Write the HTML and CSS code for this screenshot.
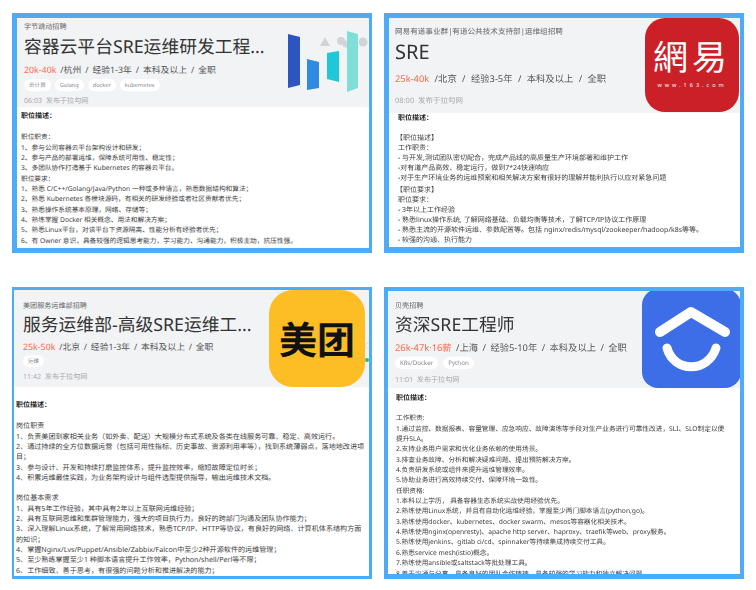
FILE: index.html
```html
<!DOCTYPE html>
<html lang="en">
<head>
<meta charset="UTF-8">
<meta name="viewport" content="width=device-width, initial-scale=1.0">
<title>SRE 招聘</title>
<link rel="stylesheet" href="styles.css">
</head>
<body>
<div class="board">

    <div class="card card-bytedance">
        <div class="head">
            <div class="company">字节跳动招聘</div>
            <div class="title">容器云平台SRE运维研发工程...</div>
            <div class="meta"><span class="pay">20k-40k</span> /杭州 / 经验1-3年 / 本科及以上 / 全职</div>
            <div class="tags"><span>云计算</span><span>Golang</span><span>docker</span><span>kubernetes</span></div>
            <div class="time">06:03&nbsp; 发布于拉勾网</div>
        </div>
        <div class="desc">
            <h3>职位描述：</h3>
            <p class="gap"></p>
            <p>职位职责：</p>
            <p>1、参与公司容器云平台架构设计和研发；</p>
            <p>2、参与产品的部署运维，保障系统可用性、稳定性；</p>
            <p>3、多团队协作打造基于 Kubernetes 的容器云平台。</p>
            <p>职位要求：</p>
            <p>1、熟悉 C/C++/Golang/Java/Python 一种或多种语言，熟悉数据结构和算法；</p>
            <p>2、熟悉 Kubernetes 各模块源码，有相关的研发经验或者社区贡献者优先；</p>
            <p>3、熟悉操作系统基本原理，网络、存储等；</p>
            <p>4、熟练掌握 Docker 相关概念、用法和解决方案；</p>
            <p>5、熟悉Linux平台，对该平台下资源隔离、性能分析有经验者优先；</p>
            <p>6、有 Owner 意识，具备较强的逻辑思考能力，学习能力、沟通能力，积极主动，抗压性强。</p>
        </div>
        <svg class="logo logo-bars" viewBox="0 0 90 66">
            <g fill="#d2d4d7">
                <path d="M33 16l5-9 5 9z"/>
                <circle cx="54" cy="11" r="4"/>
                <circle cx="59" cy="14" r="3.5"/>
                <circle cx="76" cy="12" r="4.5"/>
            </g>
            <polygon fill="#2d55c0" points="1,4 13,7 13,55 1,58"/>
            <polygon fill="#2f8be0" points="20,29 32,32 32,58 20,60"/>
            <polygon fill="#1ec8d6" points="40,23 52,21 52,52 40,49"/>
            <polygon fill="#7fdfd6" points="60,1 71,4 71,58 60,62"/>
        </svg>
    </div>

    <div class="card card-netease">
        <div class="head">
            <div class="company">网易有道事业群|有道公共技术支持部|运维组招聘</div>
            <div class="title">SRE</div>
            <div class="meta"><span class="pay">25k-40k</span> /北京 / 经验3-5年 / 本科及以上 / 全职</div>
            <div class="time">08:00&nbsp; 发布于拉勾网</div>
        </div>
        <div class="desc">
            <h3>职位描述：</h3>
            <p class="gap"></p>
            <p class="bracket">【职位描述】</p>
            <p>工作职责：</p>
            <p>- 与开发,测试团队密切配合，完成产品线的高质量生产环境部署和维护工作</p>
            <p>-对有道产品高效、稳定运行，做到7*24快速响应</p>
            <p>-对于生产环境业务的运维预案和相关解决方案有很好的理解并能利执行以应对紧急问题</p>
            <p class="bracket bracket-second">【职位要求】</p>
            <p>职位要求：</p>
            <p>- 3年以上工作经验</p>
            <p>- 熟悉linux操作系统, 了解网络基础、负载均衡等技术，了解TCP/IP协议工作原理</p>
            <p>- 熟悉主流的开源软件运维、参数配置等。包括 nginx/redis/mysql/zookeeper/hadoop/k8s等等。</p>
            <p>- 较强的沟通、执行能力</p>
        </div>
        <div class="logo logo-163">
            <span class="logo-163-name">網易</span>
            <span class="logo-163-url">www.163.com</span>
        </div>
    </div>

    <div class="card card-meituan">
        <div class="head">
            <div class="company">美团服务运维部招聘</div>
            <div class="title">服务运维部-高级SRE运维工...</div>
            <div class="meta"><span class="pay">25k-50k</span> /北京 / 经验1-3年 / 本科及以上 / 全职</div>
            <div class="tags"><span>运维</span></div>
            <div class="time">11:42&nbsp; 发布于拉勾网</div>
        </div>
        <div class="desc">
            <h3>职位描述：</h3>
            <p class="gap"></p>
            <p>岗位职责</p>
            <p>1、负责美团到家相关业务（如外卖、配送）大规模分布式系统及各类在线服务可靠、稳定、高效运行。</p>
            <p>2、通过持续的全方位数据运营（包括可用性指标、历史事故、资源利用率等），找到系统薄弱点，落地地改进项<br>目；</p>
            <p>3、参与设计、开发和持续打磨监控体系，提升监控效率，缩短故障定位时长；</p>
            <p>4、积累运维最佳实践，为业务架构设计与组件选型提供指导，输出运维技术文档。</p>
            <p class="gap"></p>
            <p>岗位基本需求</p>
            <p>1、具有5年工作经验，其中具有2年以上互联网运维经验；</p>
            <p>2、具有互联网思维和集群管理能力，强大的项目执行力，良好的跨部门沟通及团队协作能力；</p>
            <p>3、深入理解Linux系统，了解常用网络技术，熟悉TCP/IP、HTTP等协议，有良好的网络、计算机体系结构方面<br>的知识；</p>
            <p>4、掌握Nginx/Lvs/Puppet/Ansible/Zabbix/Falcon中至少2种开源软件的运维管理；</p>
            <p>5、至少熟练掌握至少1 种脚本语言提升工作效率，Python/shell/Perl等不限；</p>
            <p>6、工作细致、善于思考，有很强的问题分析和推进解决的能力；</p>
        </div>
        <div class="logo logo-meituan">美团</div>
        <span class="dot dot-ring"></span>
        <span class="dot dot-green"></span>
    </div>

    <div class="card card-beike">
        <div class="head">
            <div class="company">贝壳招聘</div>
            <div class="title">资深SRE工程师</div>
            <div class="meta"><span class="pay">26k-47k·16薪</span> /上海 / 经验5-10年 / 本科及以上 / 全职</div>
            <div class="tags"><span>K8s/Docker</span><span>Python</span></div>
            <div class="time">11:01&nbsp; 发布于拉勾网</div>
        </div>
        <div class="desc">
            <h3>职位描述：</h3>
            <p class="gap"></p>
            <p>工作职责:</p>
            <p>1.通过监控、数据报表、容量管理、应急响应、故障演练等手段对生产业务进行可靠性改进，SLI、SLO制定以便<br>提升SLA。</p>
            <p>2.支持业务用户需求和优化业务依赖的使用场景。</p>
            <p>3.排查业务故障、分析和解决疑难问题、提出预防解决方案。</p>
            <p>4.负责研发系统或组件来提升运维管理效率。</p>
            <p>5.协助业务进行高效持续交付、保障环境一致性。</p>
            <p>任职资格:</p>
            <p>1.本科以上学历， 具备容器生态系统实战使用经验优先。</p>
            <p>2.熟练使用Linux系统，并且有自动化运维经验，掌握至少两门脚本语言(python,go)。</p>
            <p>3.熟练使用docker、kubernetes、docker swarm、mesos等容器化相关技术。</p>
            <p>4.熟练使用nginx(openresty)、apache http server、haproxy、traefik等web、proxy服务。</p>
            <p>5.熟练使用jenkins、gitlab ci/cd、spinnaker等持续集成持续交付工具。</p>
            <p>6.熟悉service mesh(istio)概念。</p>
            <p>7.熟练使用ansible或saltstack等批处理工具。</p>
            <p>8.善于沟通与分享，具备良好的团队合作精神，具备较强的学习能力和独立解决问题</p>
        </div>
        <svg class="logo logo-beike" viewBox="0 0 99 99">
            <polyline points="18,43 49,23 83,43" fill="none" stroke="#fff" stroke-width="10" stroke-linecap="round" stroke-linejoin="round"/>
            <path d="M25 59 C32 84 66 84 74 59" fill="none" stroke="#fff" stroke-width="9" stroke-linecap="round"/>
        </svg>
    </div>

</div>
</body>
</html>
```

FILE: styles.css
```css
body{
margin: 0;
background: #fff;
font-family: "Noto Sans", "Noto Sans CJK SC", sans-serif;
color: #333;
text-rendering: geometricPrecision;
}

.board{
display: grid;
grid-template-columns: 360px 360px;
grid-template-rows: 240px 292px;
column-gap: 12px;
row-gap: 34px;
padding: 13px 12px;
filter: blur(0.35px);
}

.card{
position: relative;
border: 5px solid #4dabf7;
background: #fff;
overflow: hidden;
}

.head{
background: #f2f3f5;
box-sizing: border-box;
}

.company{
font-size: 7.1px;
line-height: 10px;
color: #666;
}

.title{
font-size: 17.8px;
line-height: 24px;
color: #333;
white-space: nowrap;
}

.meta{
font-size: 8.8px;
line-height: 12px;
color: #555;
white-space: nowrap;
word-spacing: 1.7px;
}

.pay{
color: #fd6a4b;
}

.tags{
display: flex;
gap: 4px;
}

.tags span{
background: #fff;
border-radius: 6px;
height: 12px;
line-height: 12px;
padding: 0 5px;
font-size: 5.6px;
color: #888;
}

.time{
font-size: 7.1px;
line-height: 10px;
color: #aaa;
}

.desc{
font-size: 6.7px;
line-height: 10.35px;
color: #3d3d3d;
white-space: nowrap;
}

.desc h3{
margin: 0;
font-size: 7px;
line-height: 10.35px;
font-weight: 700;
color: #222;
}

.desc p{
margin: 0;
}

.gap{
height: 10px;
}

.logo{
position: absolute;
}

/* bytedance */
.card-bytedance{
border-right-width: 3px;
}
.card-bytedance .head{
height: 89px;
padding: 4px 0 0 7px;
}
.card-bytedance .title{
margin-top: 3px;
}
.card-bytedance .meta{
margin-top: 5px;
}
.card-bytedance .tags{
margin-top: 3px;
}
.card-bytedance .time{
margin-top: 5px;
}
.card-bytedance .desc{
padding: 5px 8px 0 4px;
}

.logo-bars{
width: 90px;
height: 66px;
left: 270px;
top: 12px;
}

/* netease */
.card-netease{
border-width: 5px 4px 6px 5px;
}
.card-netease .head{
height: 95px;
padding: 9px 0 0 6px;
}
.card-netease .company{
font-size: 7.6px;
}
.card-netease .title{
margin-top: 2px;
font-size: 20px;
line-height: 26px;
}
.card-netease .meta{
margin-top: 8px;
font-size: 9.3px;
word-spacing: 3px;
}
.card-netease .time{
margin-top: 11px;
font-size: 7.5px;
}
.card-netease .desc{
padding: 1px 8px 0 9px;
font-size: 7px;
line-height: 10px;
}
.card-netease .bracket{
margin-left: -2px;
}
.card-netease .bracket-second{
margin-top: 2px;
}

.logo-163{
left: 256px;
top: 0;
width: 94px;
height: 94px;
border-radius: 20px;
background: #cb2027;
color: #fff;
display: flex;
flex-direction: column;
align-items: center;
}
.logo-163-name{
font-size: 35px;
line-height: 42px;
letter-spacing: 4px;
margin-top: 17px;
font-family: "Noto Sans CJK TC", sans-serif;
}
.logo-163-url{
font-size: 5.5px;
line-height: 8px;
letter-spacing: 3px;
margin-top: 4px;
}

/* meituan */
.card-meituan{
border-width: 3px 3px 3px 2px;
}
.card-meituan .head{
height: 97px;
padding: 11px 0 0 9px;
}
.card-meituan .title{
margin-top: 2px;
}
.card-meituan .meta{
margin-top: 4px;
word-spacing: 1.5px;
}
.card-meituan .tags{
margin-top: 2px;
}
.card-meituan .time{
margin-top: 5px;
}
.card-meituan .desc{
padding: 14px 14px 0 2px;
font-size: 7.1px;
}

.logo-meituan{
left: 255px;
top: 0;
width: 96px;
height: 97px;
border-radius: 24px;
background: #fcbd25;
color: #111;
font-size: 38px;
font-weight: 700;
line-height: 95px;
text-align: center;
font-family: "Noto Sans CJK SC", sans-serif;
}

.dot{
position: absolute;
right: 0;
width: 4px;
height: 4px;
border-radius: 50%;
}
.dot-ring{
top: 52px;
width: 5px;
height: 5px;
border: 1px solid #ddd;
right: -3px;
}
.dot-green{
top: 68px;
background: #2bbf7a;
}

/* beike */
.card-beike{
border-width: 4px 4px 5px 4px;
}
.card-beike .head{
height: 97px;
padding: 10px 0 0 7px;
}
.card-beike .title{
margin-top: 2px;
}
.card-beike .meta{
margin-top: 5px;
font-size: 9.3px;
word-spacing: 2px;
}
.card-beike .tags{
margin-top: 3px;
gap: 5px;
}
.card-beike .tags span{
font-size: 6.2px;
}
.card-beike .time{
margin-top: 6px;
}
.card-beike .desc{
padding: 6px 20px 0 8px;
}
.card-beike .gap{
height: 9px;
}

.logo-beike{
left: 254px;
top: -2px;
width: 99px;
height: 99px;
border-radius: 16px;
background: #3d6ee8;
}
```
